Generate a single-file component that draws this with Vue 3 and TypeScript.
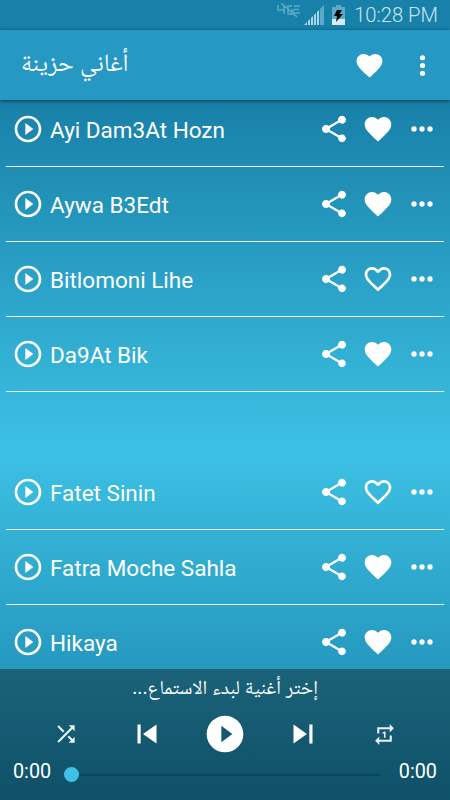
<script setup lang="ts">
interface Song {
  title: string
  liked: boolean
  gapAfter?: boolean
}

const songs: Song[] = [
  { title: 'Ayi Dam3At Hozn', liked: true },
  { title: 'Aywa B3Edt', liked: true },
  { title: 'Bitlomoni Lihe', liked: false },
  { title: 'Da9At Bik', liked: true, gapAfter: true },
  { title: 'Fatet Sinin', liked: false },
  { title: 'Fatra Moche Sahla', liked: true },
  { title: 'Hikaya', liked: true },
]

const heart =
  'M12 21.35l-1.45-1.32C5.4 15.36 2 12.28 2 8.5 2 5.42 4.42 3 7.5 3c1.74 0 3.41.81 4.5 2.09C13.09 3.81 14.76 3 16.5 3 19.58 3 22 5.42 22 8.5c0 3.78-3.4 6.86-8.55 11.54L12 21.35z'
const heartOutline =
  'M16.5 3c-1.74 0-3.41.81-4.5 2.09C10.91 3.81 9.24 3 7.5 3 4.42 3 2 5.42 2 8.5c0 3.78 3.4 6.86 8.55 11.54L12 21.35l1.45-1.32C18.6 15.36 22 12.28 22 8.5 22 5.42 19.58 3 16.5 3zm-4.4 15.55l-.1.1-.1-.1C7.14 14.24 4 11.39 4 8.5 4 6.5 5.5 5 7.5 5c1.54 0 3.04.99 3.57 2.36h1.87C13.46 5.99 14.96 5 16.5 5c2 0 3.5 1.5 3.5 3.5 0 2.89-3.14 5.74-7.9 10.05z'
</script>

<template>
  <div class="screen">
    <div class="status">
      <svg class="muted" width="24" height="16" viewBox="0 0 24 16" fill="none" stroke="#5aabc9" stroke-width="1.5">
        <path d="M1 2v5h7M7 2v9M15 3h-4v8h5V7h-2M17 3h6M17 6.500h5M17 10h6M4 0l16 14" />
      </svg>
      <svg class="signal" width="20" height="21" viewBox="0 0 20 21">
        <path fill="#a9d5e5" d="M0 20l3-3v3zM4 16l2-2v6H4zM7 13l2-2v9H7zM10 10l2-2v12h-2zM13 7l2-2v15h-2z" />
        <path fill="#5aabc9" d="M16 4l4-4v20h-4z" />
      </svg>
      <svg class="battery" width="13" height="20" viewBox="0 0 13 20">
        <path fill="#5aabc9" d="M4 0h5v2h4v12H0V2h4z" />
        <path fill="#d7ecf4" d="M0 14h13v6H0z" />
        <path fill="#050505" d="M5 5h5L7.500 9H11L4 17l1-6H2z" />
      </svg>
      <span>10:28 PM</span>
    </div>

    <header class="toolbar">
      <h1 dir="rtl">أغاني حزينة</h1>
      <svg class="bar-heart" viewBox="0 0 24 24"><path :d="heart" /></svg>
      <svg class="bar-more" viewBox="0 0 24 24">
        <circle cx="12" cy="6" r="2" /><circle cx="12" cy="12" r="2" /><circle cx="12" cy="18" r="2" />
      </svg>
    </header>

    <main class="list">
      <div v-for="song in songs" :key="song.title" class="row" :class="{ gap: song.gapAfter }">
        <svg class="icon" viewBox="0 0 24 24">
          <path d="M10 16.500l6-4.500-6-4.500v9zM12 2C6.480 2 2 6.480 2 12s4.480 10 10 10 10-4.480 10-10S17.520 2 12 2zm0 18c-4.410 0-8-3.590-8-8s3.590-8 8-8 8 3.590 8 8-3.590 8-8 8z" />
        </svg>
        <span class="title">{{ song.title }}</span>
        <svg class="icon" viewBox="0 0 24 24">
          <path d="M18 16.080c-.76 0-1.440.3-1.960.77L8.910 12.700c.05-.23.09-.46.09-.7s-.04-.47-.09-.7l7.050-4.110c.54.5 1.250.81 2.040.81 1.660 0 3-1.340 3-3s-1.340-3-3-3-3 1.340-3 3c0 .24.04.47.09.7L8.040 9.810C7.500 9.310 6.790 9 6 9c-1.660 0-3 1.340-3 3s1.340 3 3 3c.79 0 1.500-.31 2.040-.81l7.120 4.160c-.05.21-.08.43-.08.65 0 1.610 1.310 2.920 2.920 2.920s2.920-1.310 2.920-2.920-1.310-2.920-2.920-2.920z" />
        </svg>
        <svg class="icon" viewBox="0 0 24 24"><path :d="song.liked ? heart : heartOutline" /></svg>
        <svg class="icon" viewBox="0 0 24 24">
          <circle cx="6" cy="12" r="2" /><circle cx="12" cy="12" r="2" /><circle cx="18" cy="12" r="2" />
        </svg>
      </div>
    </main>

    <footer class="player">
      <p class="hint" dir="rtl">إختر أغنية لبدء الاستماع...</p>
      <div class="controls">
        <svg class="small shuffle" viewBox="0 0 24 24">
          <path d="M10.590 9.170L5.410 4 4 5.410l5.170 5.170 1.420-1.410zM14.500 4l2.040 2.040L4 18.590 5.410 20 17.960 7.460 20 9.500V4h-5.500zm.33 9.410l-1.410 1.410 3.130 3.130L14.500 20H20v-5.500l-2.040 2.040-3.130-3.130z" />
        </svg>
        <svg class="skip previous" viewBox="0 0 24 24"><path d="M6 6h2v12H6zm3.500 6l8.500 6V6z" /></svg>
        <svg class="play" viewBox="0 0 24 24">
          <path d="M12 2C6.480 2 2 6.480 2 12s4.480 10 10 10 10-4.480 10-10S17.520 2 12 2zm-2 14.500v-9l6 4.500-6 4.500z" />
        </svg>
        <svg class="skip next" viewBox="0 0 24 24"><path d="M6 18l8.500-6L6 6v12zM16 6v12h2V6h-2z" /></svg>
        <svg class="small repeat" viewBox="0 0 24 24">
          <path d="M7 7h10v3l4-4-4-4v3H5v6h2V7zm10 10H7v-3l-4 4 4 4v-3h12v-6h-2v4zm-4-2V9h-1l-2 1v1h1.500v4H13z" />
        </svg>
      </div>
      <div class="progress">
        <span>0:00</span>
        <div class="seek"><i class="thumb"></i><i class="track"></i></div>
        <span>0:00</span>
      </div>
    </footer>
  </div>
</template>

<style>
body {
  margin: 0;
}
</style>

<style scoped>
.screen {
  width: 450px;
  height: 800px;
  display: flex;
  flex-direction: column;
  overflow: hidden;
  color: #fff;
  font-family: Roboto, "Noto Naskh Arabic", "Noto Sans Arabic", "DejaVu Sans", sans-serif;
  background: linear-gradient(#1880a8 100px, #3cc1e4 450px, #1880a8 800px);
}
svg {
  display: block;
  flex: none;
  fill: #fff;
}
.status {
  height: 30px;
  flex: none;
  box-sizing: border-box;
  padding-right: 12px;
  display: flex;
  align-items: center;
  justify-content: flex-end;
  background: #1881a9;
  color: #c9e6f0;
  font-size: 20.200px;
  font-weight: 300;
}
.muted {
  fill: none;
  margin: -8px 3px 0 0;
}
.signal {
  margin-right: 8px;
}
.battery {
  margin: -1px 9px 0 0;
}
.toolbar {
  height: 70px;
  flex: none;
  box-sizing: border-box;
  padding: 0 12px 0 21px;
  display: flex;
  align-items: center;
  background: #2598c4;
  box-shadow: 0 1px 4px rgba(0, 0, 0, 0.55);
  z-index: 1;
}
h1 {
  margin: 0 auto 5px 0;
  font-size: 24.800px;
  font-weight: 400;
  line-height: 40px;
  white-space: nowrap;
}
.bar-heart {
  width: 31px;
  height: 31px;
  margin-right: 22px;
}
.bar-more {
  width: 31px;
  height: 31px;
}
.list {
  height: 569px;
  flex: none;
  overflow: hidden;
  display: flex;
  flex-direction: column;
}
.row {
  height: 75px;
  flex: none;
  box-sizing: border-box;
  margin: 0 6px;
  padding: 0 6px;
  display: flex;
  align-items: center;
  gap: 12px;
  border-bottom: 1px solid #f4fbfd;
}
.row:first-child {
  margin-top: -8px;
}
.row.gap {
  margin-bottom: 63px;
}
.icon {
  width: 32px;
  height: 32px;
}
.title {
  flex: 1;
  margin-left: -6px;
  padding-top: 1px;
  font-size: 22.500px;
  white-space: nowrap;
}
.player {
  height: 131px;
  flex: none;
  display: flex;
  flex-direction: column;
  background: linear-gradient(#1b6279, #0e5169);
}
.hint {
  height: 38px;
  margin: 0;
  text-align: center;
  font-size: 19.600px;
  line-height: 37px;
  white-space: nowrap;
}
.controls {
  height: 54px;
  display: grid;
  grid-template-columns: repeat(5, 79px);
  justify-content: center;
  justify-items: center;
  align-items: center;
}
.small {
  width: 26px;
  height: 26px;
  fill: #e8f0f3;
}
.shuffle {
  margin-right: 3px;
}
.repeat {
  width: 25px;
  height: 25px;
  margin-left: 3px;
}
.skip {
  width: 38px;
  height: 38px;
}
.previous {
  margin-left: 1px;
}
.next {
  margin-right: 2px;
}
.play {
  width: 44px;
  height: 44px;
}
.progress {
  display: flex;
  align-items: center;
  justify-content: space-between;
  padding: 0 13px;
  height: 20px;
  font-size: 19.800px;
}
.seek {
  width: 316px;
  margin: 7px 7px 0 0;
  display: flex;
  align-items: center;
}
.thumb {
  width: 15px;
  height: 15px;
  border-radius: 50%;
  background: #3fc1e6;
}
.track {
  flex: 1;
  height: 2px;
  background: #0b4459;
}
</style>
